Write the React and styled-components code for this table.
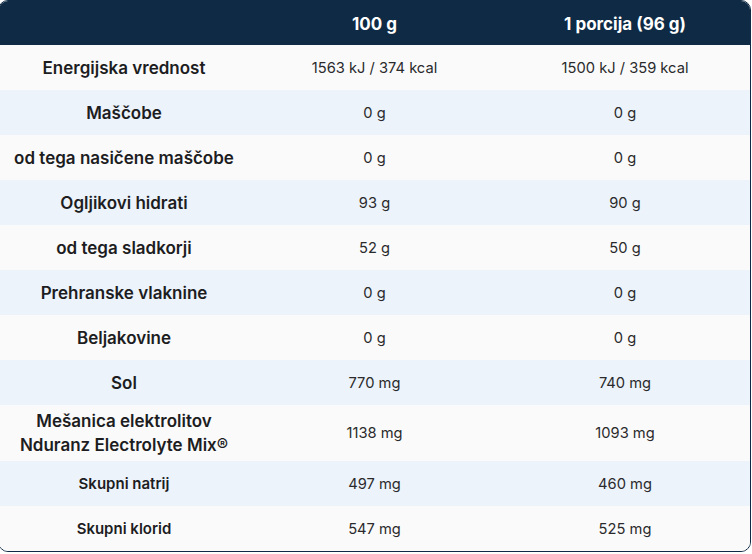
import React from 'react';
import styled, { createGlobalStyle } from 'styled-components';

const GlobalStyle = createGlobalStyle`
  html, body {
    margin: 0;
    padding: 0;
    background: #ffffff;
  }
  body {
    font-family: Inter, "Noto Sans", "Liberation Sans", sans-serif;
    -webkit-font-smoothing: antialiased;
  }
`;

const NAVY = '#0e2a44';

const Table = styled.div`
  box-sizing: border-box;
  width: 753px;
  margin-left: -2px;
  border: 1px solid ${NAVY};
  border-radius: 10px;
  overflow: hidden;
  background: #fafafa;
`;

const Row = styled.div`
  display: grid;
  grid-template-columns: 250px 251px 1fr;
  min-height: 45px;
  background: ${({ $tint }) => ($tint ? '#ecf3fa' : '#fafafa')};
`;

const HeadRow = styled(Row)`
  background: ${NAVY};
  min-height: 44px;
`;

const Cell = styled.div`
  display: flex;
  align-items: center;
  justify-content: center;
  text-align: center;
  padding: 4px 8px;
  box-sizing: border-box;
`;

const HeadCell = styled(Cell)`
  color: #ffffff;
  font-size: 17px;
  font-weight: 700;
  padding-bottom: 3px;
`;

const Label = styled(Cell)`
  color: #1d1d1f;
  font-size: ${({ $small }) => ($small ? '15px' : '17px')};
  font-weight: 600;
  line-height: 24px;
`;

const Value = styled(Cell)`
  color: #2a2a2c;
  font-size: 14.7px;
  font-weight: 400;
`;

const rows = [
  { label: 'Energijska vrednost', a: '1563 kJ / 374 kcal', b: '1500 kJ / 359 kcal' },
  { label: 'Maščobe', a: '0 g', b: '0 g' },
  { label: 'od tega nasičene maščobe', a: '0 g', b: '0 g' },
  { label: 'Ogljikovi hidrati', a: '93 g', b: '90 g' },
  { label: 'od tega sladkorji', a: '52 g', b: '50 g' },
  { label: 'Prehranske vlaknine', a: '0 g', b: '0 g' },
  { label: 'Beljakovine', a: '0 g', b: '0 g' },
  { label: 'Sol', a: '770 mg', b: '740 mg' },
  { label: ['Mešanica elektrolitov', 'Nduranz Electrolyte Mix®'], a: '1138 mg', b: '1093 mg' },
  { label: 'Skupni natrij', a: '497 mg', b: '460 mg', small: true },
  { label: 'Skupni klorid', a: '547 mg', b: '525 mg', small: true },
];

const App = () => (
  <>
    <GlobalStyle />
    <Table>
      <HeadRow>
        <HeadCell />
        <HeadCell>100 g</HeadCell>
        <HeadCell>1 porcija (96 g)</HeadCell>
      </HeadRow>
      {rows.map((r, i) => (
        <Row key={i} $tint={i % 2 === 1}>
          <Label $small={r.small}>
            {Array.isArray(r.label) ? (
              <span>
                {r.label[0]}
                <br />
                {r.label[1]}
              </span>
            ) : (
              r.label
            )}
          </Label>
          <Value>{r.a}</Value>
          <Value>{r.b}</Value>
        </Row>
      ))}
    </Table>
  </>
);

export default App;
